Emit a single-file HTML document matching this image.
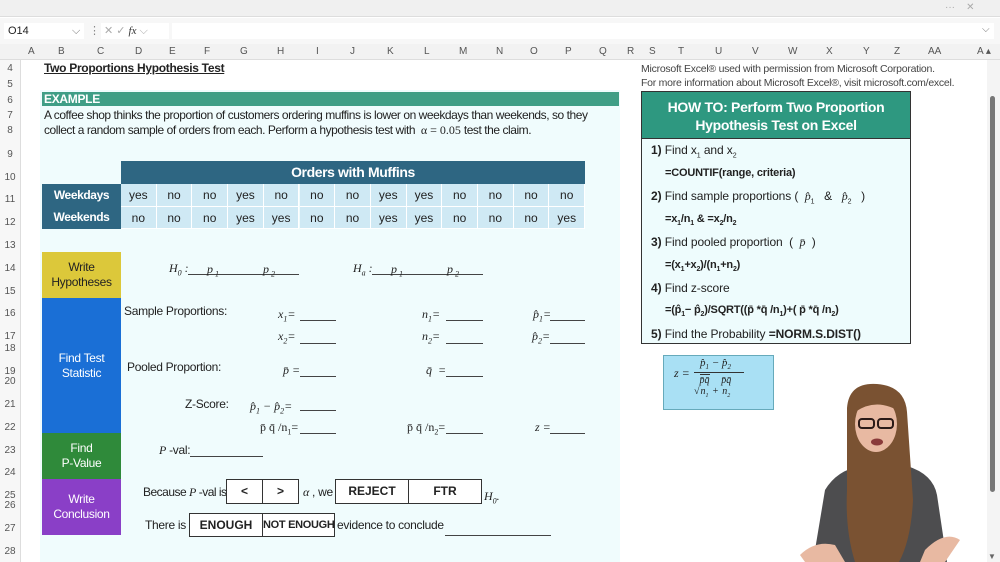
<!DOCTYPE html>
<html><head><meta charset="utf-8"><style>
*{margin:0;padding:0;box-sizing:border-box}
body{width:1000px;height:562px;overflow:hidden;background:#fff;font-family:"Liberation Sans",Arial,sans-serif;color:#222;position:relative}
.a{position:absolute;white-space:nowrap}
.f{font-size:12px;letter-spacing:-0.3px}
.r{font-size:12px;letter-spacing:-0.1px}
.s{font-family:"Liberation Serif",serif;font-style:italic;font-size:12px}
.u{border-bottom:1px solid #444;position:absolute;height:1px}
.cell{position:absolute;background:#cfe9f4;border-right:1px solid #fff;border-bottom:1px solid #fff;text-align:center;font-size:12px;line-height:22px}
.rn{position:absolute;left:0;width:20px;text-align:center;font-size:10px;color:#555}
.ch{position:absolute;top:46px;font-size:10px;color:#555}
.box{position:absolute;border:1.5px solid #333;background:#fff;font-weight:bold;font-size:12px;text-align:center;line-height:22px;white-space:nowrap}
.lab{position:absolute;left:42px;width:79px;color:#fff;font-size:12px;text-align:center;display:flex;align-items:center;justify-content:center;line-height:15px;letter-spacing:-0.3px}
sub{line-height:0}
</style></head><body>
<div class="a" style="left:0;top:0;width:1000px;height:17px;background:#f0f0f0;border-bottom:1px solid #ddd"></div>
<div class="a" style="left:945px;top:2px;font-size:10px;color:#aaa">···&nbsp;&nbsp;&nbsp;&nbsp;✕</div>
<div class="a" style="left:0;top:18px;width:1000px;height:42px;background:#f7f7f7"></div>
<div class="a" style="left:4px;top:23px;width:80px;height:16px;background:#fff;font-size:11px;line-height:16px;padding-left:4px">O14 <span style="position:absolute;left:68px;color:#777">⌵</span></div>
<div class="a" style="left:89px;top:24px;font-size:11px;color:#888">⋮</div>
<div class="a" style="left:101px;top:23px;width:68px;height:16px;background:#fff;font-size:11px;color:#aaa;line-height:16px;padding-left:3px">✕ ✓ <i style="font-family:'Liberation Serif';color:#333">fx</i> ⌵</div>
<div class="a" style="left:172px;top:23px;width:822px;height:16px;background:#fff"></div>
<div class="a" style="left:982px;top:24px;font-size:10px;color:#777">⌵</div>
<div class="a" style="left:0;top:44px;width:1000px;height:16px;background:#f2f2f2;border-bottom:1px solid #ddd"></div>
<div class="ch" style="left:28px">A</div><div class="ch" style="left:58px">B</div><div class="ch" style="left:97px">C</div><div class="ch" style="left:135px">D</div><div class="ch" style="left:169px">E</div><div class="ch" style="left:204px">F</div><div class="ch" style="left:240px">G</div><div class="ch" style="left:277px">H</div><div class="ch" style="left:316px">I</div><div class="ch" style="left:350px">J</div><div class="ch" style="left:387px">K</div><div class="ch" style="left:424px">L</div><div class="ch" style="left:459px">M</div><div class="ch" style="left:496px">N</div><div class="ch" style="left:530px">O</div><div class="ch" style="left:565px">P</div><div class="ch" style="left:599px">Q</div><div class="ch" style="left:627px">R</div><div class="ch" style="left:649px">S</div><div class="ch" style="left:678px">T</div><div class="ch" style="left:715px">U</div><div class="ch" style="left:752px">V</div><div class="ch" style="left:788px">W</div><div class="ch" style="left:826px">X</div><div class="ch" style="left:863px">Y</div><div class="ch" style="left:894px">Z</div><div class="ch" style="left:928px">AA</div><div class="ch" style="left:977px">A ▴</div>
<div class="a" style="left:0;top:60px;width:21px;height:502px;background:#f7f7f7;border-right:1px solid #ddd"></div>
<div class="rn" style="top:63px">4</div><div class="rn" style="top:79px">5</div><div class="rn" style="top:95px">6</div><div class="rn" style="top:110px">7</div><div class="rn" style="top:125px">8</div><div class="rn" style="top:149px">9</div><div class="rn" style="top:172px">10</div><div class="rn" style="top:194px">11</div><div class="rn" style="top:217px">12</div><div class="rn" style="top:240px">13</div><div class="rn" style="top:263px">14</div><div class="rn" style="top:286px">15</div><div class="rn" style="top:308px">16</div><div class="rn" style="top:331px">17</div><div class="rn" style="top:343px">18</div><div class="rn" style="top:366px">19</div><div class="rn" style="top:376px">20</div><div class="rn" style="top:399px">21</div><div class="rn" style="top:422px">22</div><div class="rn" style="top:445px">23</div><div class="rn" style="top:467px">24</div><div class="rn" style="top:490px">25</div><div class="rn" style="top:500px">26</div><div class="rn" style="top:523px">27</div><div class="rn" style="top:546px">28</div>
<div class="a" style="left:987px;top:60px;width:13px;height:502px;background:#f4f4f4"></div>
<div class="a" style="left:990px;top:96px;width:5px;height:396px;background:#777;border-radius:3px"></div>
<div class="a" style="left:988px;top:552px;font-size:8px;color:#666">▼</div>
<div class="a" style="left:40px;top:90px;width:580px;height:472px;background:#f0fcfd"></div>
<div class="a" style="left:44px;top:61px;font-size:12px;font-weight:bold;text-decoration:underline;letter-spacing:-0.3px">Two Proportions Hypothesis Test</div>
<div class="a" style="left:42px;top:92px;width:577px;height:14px;background:#3f9e86;color:#fff;font-weight:bold;font-size:12px;line-height:14px;padding-left:2px;letter-spacing:-0.3px">EXAMPLE</div>
<div class="a f" style="left:44px;top:108px;letter-spacing:-0.45px">A coffee shop thinks the proportion of customers ordering muffins is lower on weekdays than weekends, so they</div>
<div class="a f" style="left:44px;top:123px;letter-spacing:-0.45px">collect a random sample of orders from each. Perform a hypothesis test with &nbsp;<span style="font-family:'Liberation Serif';letter-spacing:0">α = 0.05</span> test the claim.</div>
<div class="a" style="left:121px;top:161px;width:464px;height:23px;background:#2e6682;color:#fff;font-weight:bold;font-size:14px;text-align:center;line-height:23px;letter-spacing:-0.4px">Orders with Muffins</div>
<div class="a" style="left:42px;top:184px;width:79px;height:45px;background:#2e6682;color:#fff;font-weight:bold;font-size:12px;text-align:center;line-height:22px;letter-spacing:-0.4px">Weekdays<br>Weekends</div>
<div id="tb"></div>
<script>
var w=["yes","no","no","yes","no","no","no","yes","yes","no","no","no","no"],e=["no","no","no","yes","yes","no","no","yes","yes","no","no","no","yes"],h="";
for(var i=0;i<13;i++){var x=121+i*35.7;h+='<div class="cell" style="left:'+x+'px;top:184px;width:35.7px;height:23px">'+w[i]+'</div><div class="cell" style="left:'+x+'px;top:207px;width:35.7px;height:22px">'+e[i]+'</div>';}
document.getElementById("tb").innerHTML=h;
</script>
<div class="lab" style="top:252px;height:46px;background:#dcc83a;color:#222">Write<br>Hypotheses</div>
<div class="lab" style="top:298px;height:135px;background:#1a6fd6">Find Test<br>Statistic</div>
<div class="lab" style="top:433px;height:46px;background:#2f8a3a">Find<br>P-Value</div>
<div class="lab" style="top:479px;height:56px;background:#8a3fc7">Write<br>Conclusion</div>
<div class="a s" style="left:169px;top:261px">H<sub style="font-size:8px">0</sub> :</div>
<div class="u" style="left:188px;top:274px;width:111px"></div>
<div class="a s" style="left:207px;top:262px">p<sub style="font-size:8px"> 1</sub></div><div class="a s" style="left:263px;top:262px">p<sub style="font-size:8px"> 2</sub></div>
<div class="a s" style="left:353px;top:261px">H<sub style="font-size:8px">a</sub> :</div>
<div class="u" style="left:372px;top:274px;width:111px"></div>
<div class="a s" style="left:391px;top:262px">p<sub style="font-size:8px"> 1</sub></div><div class="a s" style="left:447px;top:262px">p<sub style="font-size:8px"> 2</sub></div>
<div class="a f" style="left:124px;top:304px">Sample Proportions:</div>
<div class="a s" style="left:278px;top:307px">x<sub style="font-size:8px">1</sub>=</div><div class="u" style="left:300px;top:320px;width:36px"></div>
<div class="a s" style="left:278px;top:329px">x<sub style="font-size:8px">2</sub>=</div><div class="u" style="left:300px;top:343px;width:36px"></div>
<div class="a s" style="left:422px;top:307px">n<sub style="font-size:8px">1</sub>=</div><div class="u" style="left:446px;top:320px;width:37px"></div>
<div class="a s" style="left:422px;top:329px">n<sub style="font-size:8px">2</sub>=</div><div class="u" style="left:446px;top:343px;width:37px"></div>
<div class="a s" style="left:533px;top:307px">p̂<sub style="font-size:8px">1</sub>=</div><div class="u" style="left:550px;top:320px;width:35px"></div>
<div class="a s" style="left:532px;top:329px">p̂<sub style="font-size:8px">2</sub>=</div><div class="u" style="left:550px;top:343px;width:35px"></div>
<div class="a f" style="left:127px;top:360px">Pooled Proportion:</div>
<div class="a s" style="left:283px;top:363px">p̄ =</div><div class="u" style="left:300px;top:376px;width:36px"></div>
<div class="a s" style="left:426px;top:363px">q̄ &nbsp;=</div><div class="u" style="left:446px;top:376px;width:37px"></div>
<div class="a f" style="left:185px;top:397px">Z-Score:</div>
<div class="a s" style="left:250px;top:399px">p̂<sub style="font-size:8px">1</sub> − p̂<sub style="font-size:8px">2</sub>=</div><div class="u" style="left:300px;top:410px;width:36px"></div>
<div class="a s" style="left:260px;top:420px;font-style:normal">p̄ q̄ /n<sub style="font-size:8px">1</sub>=</div><div class="u" style="left:300px;top:433px;width:36px"></div>
<div class="a s" style="left:407px;top:420px;font-style:normal">p̄ q̄ /n<sub style="font-size:8px">2</sub>=</div><div class="u" style="left:446px;top:433px;width:37px"></div>
<div class="a s" style="left:535px;top:420px">z =</div><div class="u" style="left:550px;top:433px;width:35px"></div>
<div class="a f" style="left:159px;top:443px"><i style="font-family:'Liberation Serif'">P</i> -val:</div><div class="u" style="left:190px;top:456px;width:73px"></div>
<div class="a f" style="left:143px;top:485px;letter-spacing:-0.5px">Because <i style="font-family:'Liberation Serif'">P</i> -val is</div>
<div class="box" style="left:226px;top:479px;width:37px;height:25px">&lt;</div><div class="box" style="left:262px;top:479px;width:37px;height:25px">&gt;</div>
<div class="a f" style="left:303px;top:485px"><i style="font-family:'Liberation Serif'">α</i> , we</div>
<div class="box" style="left:335px;top:479px;width:74px;height:25px">REJECT</div><div class="box" style="left:408px;top:479px;width:74px;height:25px">FTR</div>
<div class="a s" style="left:484px;top:489px">H<sub style="font-size:8px">0</sub>.</div>
<div class="a f" style="left:145px;top:518px">There is</div>
<div class="box" style="left:189px;top:513px;width:74px;height:24px">ENOUGH</div><div class="box" style="left:262px;top:513px;width:73px;height:24px;font-size:11px;letter-spacing:-0.3px">NOT ENOUGH</div>
<div class="a f" style="left:337px;top:518px">evidence to conclude</div><div class="u" style="left:445px;top:535px;width:106px"></div>
<div class="a" style="left:641px;top:62px;font-size:10.5px;color:#444;line-height:14px;letter-spacing:-0.25px">Microsoft Excel® used with permission from Microsoft Corporation.<br>For more information about Microsoft Excel®, visit microsoft.com/excel.</div>
<div class="a" style="left:641px;top:91px;width:270px;height:253px;border:1.5px solid #333;background:#eefcfd"></div>
<div class="a" style="left:641px;top:91px;width:270px;height:48px;background:#2e9880;border:1.5px solid #333;color:#fff;font-weight:bold;font-size:14px;text-align:center;line-height:18px;padding-top:6px;letter-spacing:-0.3px">HOW TO: Perform Two Proportion<br>Hypothesis Test on Excel</div>
<div class="a r" style="left:651px;top:143px"><b>1)</b> Find x<sub style="font-size:7px">1</sub> and x<sub style="font-size:7px">2</sub></div>
<div class="a" style="left:665px;top:167px;font-size:11px;font-weight:bold;letter-spacing:-0.2px">=COUNTIF(range, criteria)</div>
<div class="a r" style="left:651px;top:189px"><b>2)</b> Find sample proportions ( &nbsp;<i style="font-family:'Liberation Serif'">p̂</i><sub style="font-size:7px">1</sub> &nbsp;&nbsp;&amp; &nbsp;&nbsp;<i style="font-family:'Liberation Serif'">p̂</i><sub style="font-size:7px">2</sub> &nbsp;&nbsp;)</div>
<div class="a" style="left:665px;top:213px;font-size:11px;font-weight:bold;letter-spacing:-0.2px">=x<sub style="font-size:7px">1</sub>/n<sub style="font-size:7px">1</sub> &amp; =x<sub style="font-size:7px">2</sub>/n<sub style="font-size:7px">2</sub></div>
<div class="a r" style="left:651px;top:235px"><b>3)</b> Find pooled proportion &nbsp;( &nbsp;<i style="font-family:'Liberation Serif'">p̄</i> &nbsp;)</div>
<div class="a" style="left:665px;top:259px;font-size:11px;font-weight:bold;letter-spacing:-0.2px">=(x<sub style="font-size:7px">1</sub>+x<sub style="font-size:7px">2</sub>)/(n<sub style="font-size:7px">1</sub>+n<sub style="font-size:7px">2</sub>)</div>
<div class="a r" style="left:651px;top:281px"><b>4)</b> Find z-score</div>
<div class="a" style="left:665px;top:304px;font-size:11px;font-weight:bold;letter-spacing:-0.2px">=(p̂<sub style="font-size:7px">1</sub>− p̂<sub style="font-size:7px">2</sub>)/SQRT((p̄ *q̄ /n<sub style="font-size:7px">1</sub>)+( p̄ *q̄ /n<sub style="font-size:7px">2</sub>)</div>
<div class="a r" style="left:651px;top:327px"><b>5)</b> Find the Probability <b>=NORM.S.DIST()</b></div>
<div class="a" style="left:663px;top:355px;width:111px;height:55px;background:#a9e0f4;border:1px solid #6ab"></div>
<div class="a s" style="left:674px;top:366px">z =</div>
<div class="a s" style="left:700px;top:357px;font-size:11px">p̂<sub style="font-size:7px">1</sub> − p̂<sub style="font-size:7px">2</sub></div>
<div class="a" style="left:694px;top:372px;width:50px;border-top:1px solid #333"></div>
<div class="a s" style="left:694px;top:374px;font-size:10px;line-height:11px">√<span style="display:inline-block;text-align:center;border-top:1px solid #333">p̄q̄<br>n<sub style="font-size:6px">1</sub></span> + <span style="display:inline-block;text-align:center">p̄q̄<br>n<sub style="font-size:6px">2</sub></span></div>
<svg class="a" style="left:795px;top:380px" width="175" height="182" viewBox="0 0 175 182">
<path d="M30 110 Q42 90 66 86 L112 86 Q138 94 142 115 L152 182 L18 182 Z" fill="#4d4d4f"/>
<path d="M52 28 Q54 2 82 4 Q110 6 112 32 L118 120 Q116 160 104 182 L60 182 Q50 150 52 110 Z" fill="#7a5232"/>
<ellipse cx="81" cy="44" rx="21" ry="28" fill="#e8b9a2"/>
<path d="M60 20 Q80 6 102 22 L102 30 Q80 18 60 32 Z" fill="#7a5232"/>
<rect x="64" y="39" width="15" height="9" rx="3" fill="none" stroke="#2b1a17" stroke-width="2"/>
<rect x="83" y="39" width="15" height="9" rx="3" fill="none" stroke="#2b1a17" stroke-width="2"/>
<ellipse cx="82" cy="62" rx="6" ry="3.5" fill="#8a3a3a"/>
<path d="M5 175 Q20 160 40 165 L50 182 L10 182 Z" fill="#e8b9a2"/>
<path d="M130 170 Q150 150 165 160 L150 182 L125 182 Z" fill="#e8b9a2"/>
</svg>
</body></html>
